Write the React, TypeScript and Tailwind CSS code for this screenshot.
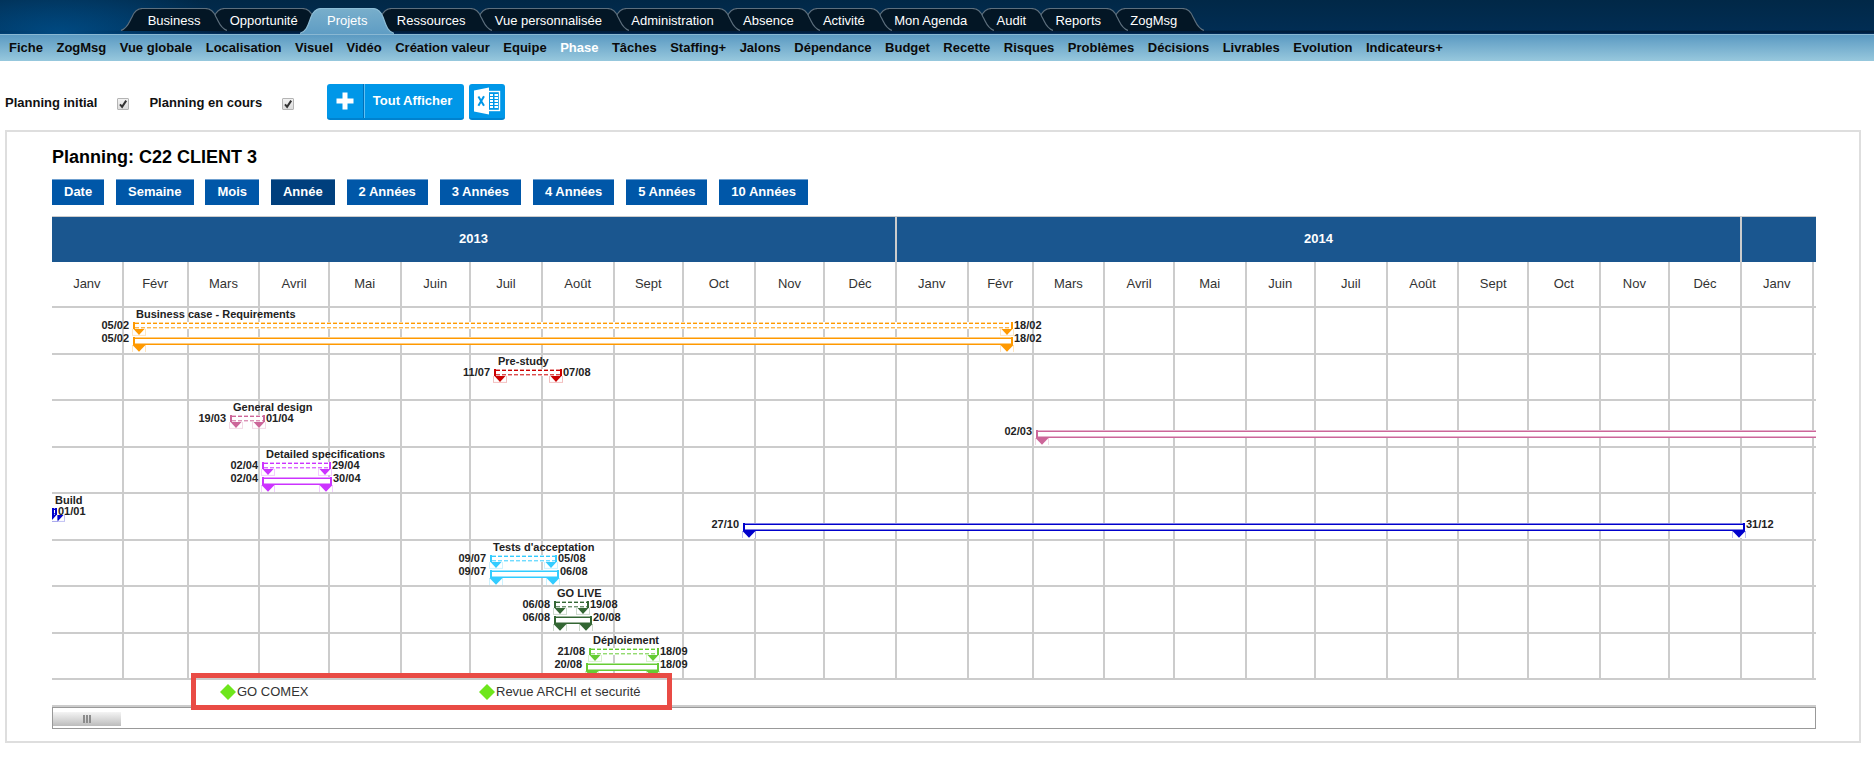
import React from "react";

const TABS = [
  "Business", "Opportunité", "Projets", "Ressources", "Vue personnalisée", "Administration",
  "Absence", "Activité", "Mon Agenda", "Audit", "Reports", "ZogMsg",
];

const LINKS = [
  "Fiche", "ZogMsg", "Vue globale", "Localisation", "Visuel", "Vidéo", "Création valeur", "Equipe",
  "Phase", "Tâches", "Staffing+", "Jalons", "Dépendance", "Budget", "Recette", "Risques",
  "Problèmes", "Décisions", "Livrables", "Evolution", "Indicateurs+",
];

const SCALES = [
  "Date", "Semaine", "Mois", "Année", "2 Années", "3 Années", "4 Années", "5 Années", "10 Années",
];

const MONTHS = ["Janv", "Févr", "Mars", "Avril", "Mai", "Juin", "Juil", "Août", "Sept", "Oct", "Nov", "Déc"];
const COLUMNS = [...MONTHS, ...MONTHS, "Janv", ""];

const MONTH_GRID =
  "grid grid-cols-[31fr_28fr_31fr_30fr_31fr_30fr_31fr_31fr_30fr_31fr_30fr_31fr_31fr_28fr_31fr_30fr_31fr_30fr_31fr_31fr_30fr_31fr_30fr_31fr_31fr_1fr]";

// Bar positions are expressed in timeline units; the visible range spans RANGE units.
const RANGE = 1764;
const pct = (units: number) => `${(units / RANGE) * 100}%`;

type Span = { start: number; end: number; from?: string; to?: string };
type Phase = { name: string; color: string; nameAt: number; initial?: Span; current?: Span };

const PHASES: Phase[] = [
  {
    name: "Business case - Requirements", color: "text-[#ff9900]", nameAt: 84,
    initial: { start: 81, end: 961, from: "05/02", to: "18/02" },
    current: { start: 81, end: 961, from: "05/02", to: "18/02" },
  },
  {
    name: "Pre-study", color: "text-[#cc0000]", nameAt: 446,
    initial: { start: 442, end: 510, from: "11/07", to: "07/08" },
  },
  {
    name: "General design", color: "text-[#cc6699]", nameAt: 181,
    initial: { start: 178, end: 213, from: "19/03", to: "01/04" },
    current: { start: 984, end: 1780, from: "02/03" },
  },
  {
    name: "Detailed specifications", color: "text-[#cc33ff]", nameAt: 214,
    initial: { start: 210, end: 279, from: "02/04", to: "29/04" },
    current: { start: 210, end: 280, from: "02/04", to: "30/04" },
  },
  {
    name: "Build", color: "text-[#0000cc]", nameAt: 3,
    initial: { start: 0, end: 5, to: "01/01" },
    current: { start: 691, end: 1693, from: "27/10", to: "31/12" },
  },
  {
    name: "Tests d'acceptation", color: "text-[#33ccff]", nameAt: 441,
    initial: { start: 438, end: 505, from: "09/07", to: "05/08" },
    current: { start: 438, end: 507, from: "09/07", to: "06/08" },
  },
  {
    name: "GO LIVE", color: "text-[#336633]", nameAt: 505,
    initial: { start: 502, end: 537, from: "06/08", to: "19/08" },
    current: { start: 502, end: 540, from: "06/08", to: "20/08" },
  },
  {
    name: "Déploiement", color: "text-[#66cc33]", nameAt: 541,
    initial: { start: 537, end: 607, from: "21/08", to: "18/09" },
    current: { start: 534, end: 607, from: "20/08", to: "18/09" },
  },
];

const MILESTONES = [
  { name: "GO COMEX", at: 168 },
  { name: "Revue ARCHI et securité", at: 427 },
];

function TabCap({ active, flip }: { active: boolean; flip?: boolean }) {
  const h = active ? 26 : 23;
  return (
    <svg
      width="22" height={h} viewBox={`0 0 22 ${h}`}
      className={flip ? "block shrink-0 -scale-x-100" : "block shrink-0"} aria-hidden="true"
    >
      <path
        d={`M0 ${h} C7 ${h - 3} 8 ${h - 9} 11 9 C13 4 16 0 22 0 V${h} Z`}
        fill={active ? "url(#tabOn)" : "#031625"}
      />
      <path
        d={`M0 ${h - 0.5} C7 ${h - 3} 8 ${h - 9} 11 9 C13 4 16 0.5 22 0.5`}
        fill="none" stroke={active ? "#8dbdd6" : "#5d6f7d"} strokeWidth="1.2"
      />
    </svg>
  );
}

function Tab({ label, index }: { label: string; index: number }) {
  const active = label === "Projets";
  return (
    <a
      href="#"
      style={{ zIndex: active ? 50 : 30 - index }}
      className="relative -mr-6 flex grow items-start text-[13px] leading-[23px] whitespace-nowrap text-white"
    >
      <TabCap active={active} />
      <span
        className={
          active
            ? "-mx-px h-[26px] grow border-t border-[#8dbdd6] bg-linear-to-b from-[#78aecb] to-[#5f9dc4] px-[3px] text-center"
            : "-mx-px h-[23px] grow border-t border-[#5d6f7d] bg-[#031625] px-[3px] text-center"
        }
      >
        {label}
      </span>
      <TabCap active={active} flip />
    </a>
  );
}

function Check({ id, label }: { id: string; label: string }) {
  return (
    <div className="flex items-center gap-5">
      <label htmlFor={id}>{label}</label>
      <span className="mt-[3px] grid size-3 place-items-center">
        <input
          id={id} type="checkbox" defaultChecked
          className="peer col-start-1 row-start-1 size-3 appearance-none rounded-[1px] border border-[#b4b4b4] bg-linear-to-b from-[#f2f2f2] to-[#dcdcdc]"
        />
        <svg
          className="pointer-events-none invisible col-start-1 row-start-1 peer-checked:visible"
          width="10" height="10" viewBox="0 0 10 10" aria-hidden="true"
        >
          <path d="M2 5.4 L4.1 7.8 L8.2 1.6" fill="none" stroke="#333" strokeWidth="2" />
        </svg>
      </span>
    </div>
  );
}

function Marker({ side, solid }: { side: "left" | "right"; solid: boolean }) {
  return (
    <svg
      className={side === "left" ? "absolute top-full -left-[3px]" : "absolute top-full -right-[3px]"}
      width="14" height="7" viewBox="0 0 14 7" aria-hidden="true"
    >
      <rect
        x="0.5" y="-1" width="13" height={solid ? 9 : 7.4}
        fill="#fff" stroke="currentColor" strokeOpacity="0.25"
      />
      {solid ? (
        <path d="M0.5 0 H13.5 L7 6.8 Z" fill="currentColor" />
      ) : (
        <path d="M1.5 0 H12.5 L7 6 Z" fill="currentColor" />
      )}
    </svg>
  );
}

const DASH = "bg-[repeating-linear-gradient(90deg,currentColor_0_4px,transparent_4px_6px)]";

function Bar({ span, solid }: { span: Span; solid: boolean }) {
  return (
    <>
      <div
        style={{ left: pct(span.start), width: pct(span.end - span.start) }}
        className={
          solid
            ? "absolute top-[29px] flex h-2 flex-col border-x-2 border-current bg-white"
            : "absolute top-[14px] flex h-[7px] flex-col border-x-2 border-current bg-white"
        }
      >
        {solid ? (
          <>
            <div className="h-px bg-current opacity-50" />
            <div className="h-px bg-current" />
            <div className="grow" />
            <div className="h-px bg-current opacity-50" />
            <div className="h-px bg-current" />
          </>
        ) : (
          <>
            <div className={`h-px opacity-40 ${DASH}`} />
            <div className={`h-px ${DASH}`} />
            <div className="grow" />
            <div className={`h-px opacity-70 ${DASH}`} />
            <div className={`h-px opacity-30 ${DASH}`} />
          </>
        )}
        <Marker side="left" solid={solid} />
        <Marker side="right" solid={solid} />
      </div>
      {span.from && (
        <span
          style={{ right: pct(RANGE - span.start + 4) }}
          className={solid ? "absolute top-6 text-[#222]" : "absolute top-[11px] text-[#222]"}
        >
          {span.from}
        </span>
      )}
      {span.to && (
        <span
          style={{ left: pct(span.end + 1) }}
          className={solid ? "absolute top-6 text-[#222]" : "absolute top-[11px] text-[#222]"}
        >
          {span.to}
        </span>
      )}
    </>
  );
}

function Header() {
  return (
    <header>
      <svg width="0" height="0" className="absolute" aria-hidden="true">
        <linearGradient id="tabOn" x1="0" y1="0" x2="0" y2="1">
          <stop offset="0" stopColor="#78aecb" />
          <stop offset="1" stopColor="#5f9dc4" />
        </linearGradient>
      </svg>
      <div className="h-[34px] bg-[radial-gradient(ellipse_170px_60px_at_60px_34px,#004a82,transparent),linear-gradient(180deg,#012847,#012d53_88%,#001a36_94%,#013060)]">
        <nav className="pt-2 pl-[121px]">
          <div className="flex w-[1059px] max-w-full">
            {TABS.map((t, i) => (
              <Tab key={t} label={t} index={i} />
            ))}
          </div>
        </nav>
      </div>
      <nav className="h-[27px] border-t border-[#8ab8d3] bg-linear-to-b from-[#5b9ac2] to-[#97c8dd] pl-[9px]">
        <div className="flex w-[1434px] max-w-full justify-between text-[13px] leading-[25px] font-bold whitespace-nowrap text-[#0a0a0a]">
          {LINKS.map((l) => (
            <a key={l} href="#" className={l === "Phase" ? "text-white" : undefined}>
              {l}
            </a>
          ))}
        </div>
      </nav>
    </header>
  );
}

function ExcelIcon() {
  return (
    <svg width="28" height="28" viewBox="0 0 28 28" aria-hidden="true">
      <rect x="14" y="4.5" width="12.5" height="19" fill="#0097e8" stroke="#fff" strokeWidth="1.4" />
      <path
        d="M17 8h3M17 11h3M17 14h3M17 17h3M17 20h3M21.5 8h3.5M21.5 11h3.5M21.5 14h3.5M21.5 17h3.5M21.5 20h3.5"
        stroke="#fff" strokeWidth="1.8"
      />
      <path d="M1 3.5 L16 0.5 V27.5 L1 24.5 Z" fill="#fff" />
      <path d="M5.4 9.5 L11 18.8 M11 9.2 L5.4 18.8" stroke="#0097e8" strokeWidth="2" />
    </svg>
  );
}

function Toolbar() {
  return (
    <div className="flex items-center pt-[23px] pb-[10px] pl-[5px] text-[13px] font-bold text-[#111]">
      <div className="flex w-80 gap-5 pt-px">
        <Check id="initial" label="Planning initial" />
        <Check id="current" label="Planning en cours" />
      </div>
      <button className="ml-0.5 flex h-9 w-[137px] items-stretch rounded-[3px] border-b-2 border-[#0082cf] bg-[#0097e8] text-white">
        <span className="grid w-[37px] place-items-center border-r border-[#0070b8]">
          <svg width="18" height="18" viewBox="0 0 18 18" aria-hidden="true">
            <path d="M9 0.5V17.5M0.5 9H17.5" stroke="#fff" strokeWidth="5" />
          </svg>
        </span>
        <span className="grow border-l border-[#5fc0f4] pr-1 text-center leading-[34px]">Tout Afficher</span>
      </button>
      <button
        aria-label="Excel"
        className="ml-[5px] grid size-9 place-items-center rounded-[3px] border-b-2 border-[#0082cf] bg-[#0097e8]"
      >
        <ExcelIcon />
      </button>
    </div>
  );
}

function Chart() {
  return (
    <div className="relative mt-[11px] border-t border-[#ccc]">
      <div className="grid h-[45px] grid-cols-[365fr_365fr_32fr] bg-[#1a568f] text-center text-[13px] leading-[44px] font-bold text-white">
        <div className="border-r-2 border-[#ccc]">2013</div>
        <div className="border-r-2 border-[#ccc]">2014</div>
        <div />
      </div>
      <div className={`${MONTH_GRID} h-[46px] border-b-2 border-[#ccc] text-center text-[13px] leading-[44px] text-[#333]`}>
        {COLUMNS.map((m, i) => (
          <div key={i} className="min-w-0 border-r-2 border-[#ccc] last:border-r-0">{m}</div>
        ))}
      </div>
      <div className="relative overflow-hidden">
        <div className={`${MONTH_GRID} absolute inset-0`}>
          {COLUMNS.map((_, i) => (
            <div key={i} className="border-r-2 border-[#ccc] last:border-r-0" />
          ))}
        </div>
        <div className="grid h-[372px] grid-rows-8">
          {PHASES.map((p) => (
            <div
              key={p.name}
              className={`relative border-b-2 border-b-[#ccc] text-[11px] leading-3 font-bold whitespace-nowrap ${p.color}`}
            >
              {p.initial && <Bar span={p.initial} solid={false} />}
              {p.current && <Bar span={p.current} solid />}
              <span style={{ left: pct(p.nameAt) }} className="absolute top-0 text-[#222]">
                {p.name}
              </span>
            </div>
          ))}
        </div>
      </div>
      <div className="relative h-[27px] border-b-2 border-[#ccc] text-[13px] leading-6 text-[#333]">
        {MILESTONES.map((m) => (
          <div key={m.name} style={{ left: pct(m.at) }} className="absolute top-0 flex items-center gap-px whitespace-nowrap">
            <svg width="16" height="16" viewBox="0 0 16 16" aria-hidden="true">
              <path d="M8 0L16 8L8 16L0 8Z" fill="#6ee61c" />
            </svg>
            <span>{m.name}</span>
          </div>
        ))}
        <div
          style={{ left: pct(139), width: pct(481) }}
          className="absolute -top-[7px] h-[37px] border-5 border-[#e94b45]"
        />
      </div>
    </div>
  );
}

export default function App() {
  return (
    <div className="bg-white font-['Liberation_Sans',Arial,sans-serif]">
      <Header />
      <Toolbar />
      <main className="mr-[13px] ml-[5px] border-2 border-[#dedede] pt-[13px] pr-[43px] pb-3 pl-[45px]">
        <h1 className="text-lg leading-6 font-bold text-black">Planning: C22 CLIENT 3</h1>
        <div className="mt-[10px] flex w-[756px] max-w-full justify-between">
          {SCALES.map((s) => (
            <button
              key={s}
              className={
                s === "Année"
                  ? "h-[26px] border-t border-[#5a86b0] bg-[#003f7d] px-3 pb-0.5 text-[13px] font-bold whitespace-nowrap text-white"
                  : "h-[26px] border-t border-[#6fa0d0] bg-[#0057a8] px-3 pb-0.5 text-[13px] font-bold whitespace-nowrap text-white"
              }
            >
              {s}
            </button>
          ))}
        </div>
        <Chart />
        <div className="h-[22px] border border-[#999] bg-white pt-1">
          <div className="flex h-[14px] w-[68px] items-center justify-center gap-px bg-linear-to-b from-[#f4f4f4] via-[#d9d9d9] to-[#bcbcbc]">
            <span className="h-2 w-0.5 bg-[#8c8c8c]" />
            <span className="h-2 w-0.5 bg-[#8c8c8c]" />
            <span className="h-2 w-0.5 bg-[#8c8c8c]" />
          </div>
        </div>
      </main>
    </div>
  );
}
